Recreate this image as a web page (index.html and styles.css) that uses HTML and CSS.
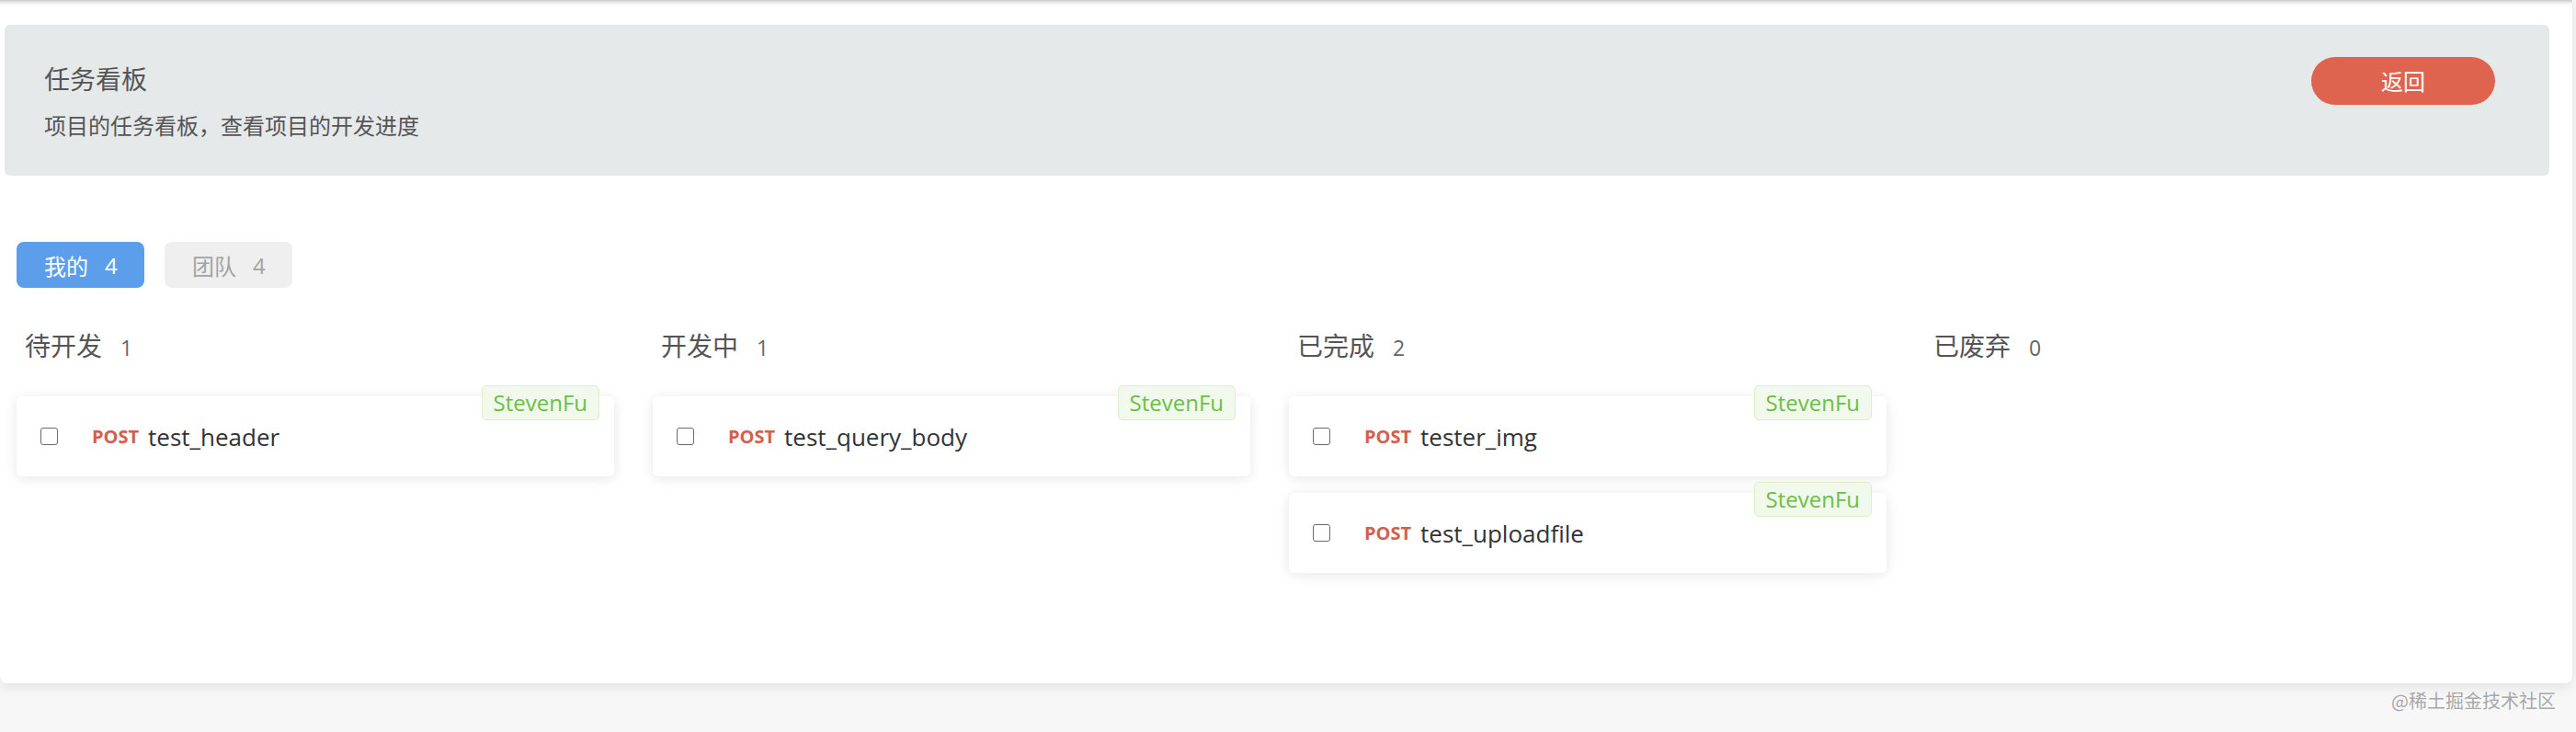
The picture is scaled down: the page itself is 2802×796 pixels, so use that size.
FILE: index.html
```html
<!DOCTYPE html>
<html lang="zh-CN">
<head>
<meta charset="utf-8">
<title>任务看板</title>
<link rel="stylesheet" href="styles.css">
</head>
<body>
<div class="page">
  <section class="panel">
    <div class="panel-text">
      <h1 class="panel-title">任务看板</h1>
      <p class="panel-desc">项目的任务看板，查看项目的开发进度</p>
    </div>
    <button class="back-btn">返回</button>
  </section>

  <nav class="tabs">
    <span class="tab tab-active">我的<span class="tab-count">4</span></span>
    <span class="tab">团队<span class="tab-count">4</span></span>
  </nav>

  <div class="board">
    <div class="column">
      <div class="col-head">待开发<span class="col-count">1</span></div>
      <div class="card">
        <span class="check"></span>
        <span class="method">POST</span>
        <span class="name">test_header</span>
        <span class="owner">StevenFu</span>
      </div>
    </div>
    <div class="column">
      <div class="col-head">开发中<span class="col-count">1</span></div>
      <div class="card">
        <span class="check"></span>
        <span class="method">POST</span>
        <span class="name">test_query_body</span>
        <span class="owner">StevenFu</span>
      </div>
    </div>
    <div class="column">
      <div class="col-head">已完成<span class="col-count">2</span></div>
      <div class="card">
        <span class="check"></span>
        <span class="method">POST</span>
        <span class="name">tester_img</span>
        <span class="owner">StevenFu</span>
      </div>
      <div class="card">
        <span class="check"></span>
        <span class="method">POST</span>
        <span class="name">test_uploadfile</span>
        <span class="owner">StevenFu</span>
      </div>
    </div>
    <div class="column">
      <div class="col-head">已废弃<span class="col-count">0</span></div>
    </div>
  </div>
</div>
<footer class="footer">
  <span class="watermark">@稀土掘金技术社区</span>
</footer>
</body>
</html>
```

FILE: styles.css
```css
* { box-sizing: border-box; }

html, body {
  margin: 0;
  padding: 0;
}

body {
  background: #f7f7f7;
  font-family: "Open Sans", "Noto Sans CJK SC", sans-serif;
  color: #555;
  width: 2802px;
  height: 796px;
  overflow: hidden;
}

.page {
  height: 743px;
  padding-top: 27px;
  background: linear-gradient(to bottom, #c9c9c9 0, #e2e2e2 2px, #fafafa 5px, #ffffff 8px);
  border-radius: 0 0 8px 8px;
  box-shadow: 0 4px 14px rgba(0, 0, 0, 0.09);
  margin-right: 4px;
}

/* header panel */
.panel {
  margin: 0 25px 0 5px;
  height: 164px;
  background: #e6e9ea;
  border-radius: 6px;
  display: flex;
  justify-content: space-between;
  align-items: flex-start;
  padding: 35px 59px 0 43px;
}

.panel-title {
  margin: 3px 0 0;
  font-family: "Noto Sans CJK SC", sans-serif;
  font-weight: 400;
  font-size: 28px;
  line-height: 40px;
  color: #555;
}

.panel-desc {
  margin: 13px 0 0;
  font-family: "Noto Sans CJK SC", sans-serif;
  font-size: 24px;
  line-height: 36px;
  color: #555;
}

.back-btn {
  width: 200px;
  height: 52px;
  border: none;
  border-radius: 26px;
  background: #de6450;
  color: #fff;
  font-family: "Noto Sans CJK SC", sans-serif;
  font-size: 24px;
  line-height: 52px;
  padding: 0;
}

/* tabs */
.tabs {
  display: flex;
  gap: 22px;
  margin: 72px 0 0 18px;
}

.tab {
  display: inline-flex;
  align-items: center;
  height: 50px;
  width: 139px;
  padding-left: 30px;
  border-radius: 8px;
  background: #efefef;
  color: #a3a3a3;
  font-family: "Noto Sans CJK SC", sans-serif;
  font-size: 24px;
}

.tab-active {
  background: #5d9eeb;
  color: #fff;
}

.tab-count {
  margin-left: 18px;
  font-family: "Open Sans", sans-serif;
}

/* board */
.board {
  display: grid;
  grid-template-columns: repeat(4, 650px);
  column-gap: 42px;
  margin: 42px 0 0 18px;
}

.column {
  display: flex;
  flex-direction: column;
  gap: 18px;
}

.col-head {
  padding-left: 9px;
  height: 40px;
  line-height: 40px;
  font-family: "Noto Sans CJK SC", sans-serif;
  font-size: 28px;
  color: #555;
  margin-bottom: 18px;
}

.col-count {
  margin-left: 20px;
  font-family: "Open Sans", sans-serif;
  font-size: 23px;
  color: #666;
}

.card {
  position: relative;
  height: 87px;
  display: flex;
  align-items: center;
  padding-left: 26px;
  background: #fff;
  border-radius: 6px;
  box-shadow: 0 2px 14px rgba(0, 0, 0, 0.1);
}

.check {
  width: 19px;
  height: 19px;
  border: 1.5px solid #6a6a6a;
  border-radius: 3px;
  background: #fff;
  flex: none;
}

.method {
  margin-left: 37px;
  font-family: "Open Sans", sans-serif;
  font-weight: 700;
  font-size: 20px;
  color: #d2604d;
}

.name {
  margin-left: 10px;
  font-family: "Open Sans", sans-serif;
  font-size: 26px;
  color: #333;
}

.owner {
  position: absolute;
  top: -12px;
  right: 16px;
  height: 38px;
  line-height: 36px;
  padding: 0 12px;
  border: 1px solid #dbeecb;
  border-radius: 5px;
  background: #f0f9eb;
  color: #6cbf45;
  font-family: "Open Sans", sans-serif;
  font-size: 24px;
}

/* footer */
.footer {
  display: flex;
  justify-content: flex-end;
  padding: 5px 22px 0 0;
}

.watermark {
  font-family: "Noto Sans CJK SC", sans-serif;
  font-size: 20px;
  line-height: 28px;
  color: #a8a8a8;
  text-shadow: 0 0 1px rgba(255, 255, 255, 0.8);
}
```
